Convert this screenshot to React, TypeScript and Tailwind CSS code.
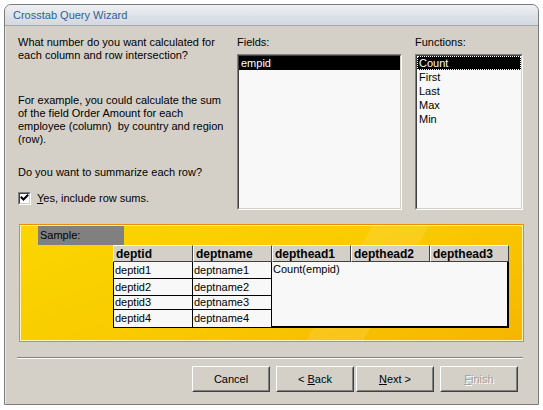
import React from "react";

function ListBox({ children }: { children: React.ReactNode }) {
  return (
    <div className="h-[156px] border border-t-[#808080] border-l-[#808080] border-b-white border-r-white">
      <div className="h-full border border-t-[#404040] border-l-[#404040] border-b-[#d4d0c8] border-r-[#d4d0c8] bg-[#f8f8f8] pt-[0px]">
        {children}
      </div>
    </div>
  );
}

function Btn({ children, disabled }: { children: React.ReactNode; disabled?: boolean }) {
  return (
    <div className="w-[78px] h-[26px] border border-t-white border-l-white border-b-[#404040] border-r-[#404040]">
      <div
        className={
          "h-full border border-t-[#d4d0c8] border-l-[#d4d0c8] border-b-[#808080] border-r-[#808080] flex items-center justify-center text-[11px] " +
          (disabled ? "text-[#a0a0a0] [text-shadow:1px_1px_0_#ffffff]" : "text-black")
        }
      >
        <span className="whitespace-pre">{children}</span>
      </div>
    </div>
  );
}

function HeadCell({ label, w }: { label: string; w: string }) {
  return (
    <div
      className={
        w +
        " h-[17px] bg-[#d4d0c8] border border-t-white border-l-white border-b-[#404040] border-r-[#404040] flex items-center pl-[2px] font-bold text-[12px] leading-none"
      }
    >
      {label}
    </div>
  );
}

export default function App() {
  const rows = [
    { a: "deptid1", b: "deptname1", h: "h-[17px]" },
    { a: "deptid2", b: "deptname2", h: "h-[17px]" },
    { a: "deptid3", b: "deptname3", h: "h-[14px]" },
    { a: "deptid4", b: "deptname4", h: "h-[17px]" },
  ];
  return (
    <div className="w-[543px] h-[410px] bg-white overflow-hidden font-['Liberation_Sans',Arial,sans-serif] text-black">
      <div className="ml-[4px] mt-[4px] w-[535px] h-[401px] border border-[#7b7b7b] rounded-t-[7px] flex flex-col bg-[#d4d0c8] overflow-hidden">
        <div className="h-[21px] shrink-0 bg-[linear-gradient(#eef0f4,#dde1e7_60%,#d3d8df)] border-b border-[#a3a8b0] flex items-center pl-[8px] text-[11px] text-[#2f5f9f]">
          Crosstab Query Wizard
        </div>
        <div className="flex-1 flex flex-col pl-[12px] pt-[10px] border-l border-[#e9e7e2]">
          <div className="flex text-[11px] leading-[13px]">
            <div className="w-[219px]">
              <p>
                What number do you want calculated for
                <br />
                each column and row intersection?
              </p>
              <p className="mt-[32px]">
                For example, you could calculate the sum
                <br />
                of the field Order Amount for each
                <br />
                employee (column)&nbsp; by country and region
                <br />
                (row).
              </p>
              <p className="mt-[20px]">Do you want to summarize each row?</p>
              <div className="mt-[13px] flex items-center h-[13px]">
                <div className="w-[13px] h-[13px] border border-t-[#808080] border-l-[#808080] border-b-white border-r-white">
                  <div className="w-full h-full border border-t-[#404040] border-l-[#404040] border-b-[#d4d0c8] border-r-[#d4d0c8] bg-white">
                    <svg width="9" height="9" viewBox="0 0 9 9" className="block">
                      <polyline points="1.5,3.5 3.5,5.5 7.5,1.5" fill="none" stroke="#000" strokeWidth="2" strokeLinecap="square" />
                    </svg>
                  </div>
                </div>
                <span className="ml-[6px]">
                  <span className="underline">Y</span>es, include row sums.
                </span>
              </div>
            </div>
            <div className="w-[165px]">
              <div className="h-[13px]">Fields:</div>
              <div className="mt-[5px]">
                <ListBox>
                  <div className="h-[14px] bg-black text-white pl-[2px] leading-[14px]">empid</div>
                </ListBox>
              </div>
            </div>
            <div className="ml-[13px] w-[108px]">
              <div className="h-[13px]">Functions:</div>
              <div className="mt-[5px]">
                <ListBox>
                  <div className="h-[14px] bg-black text-white pl-[1px] leading-[12px] border border-dotted border-white">Count</div>
                  {["First", "Last", "Max", "Min"].map((f) => (
                    <div key={f} className="h-[14px] pl-[2px] leading-[14px]">
                      {f}
                    </div>
                  ))}
                </ListBox>
              </div>
            </div>
          </div>

          <div className="mt-[14px] ml-[1px] w-[505px] h-[118px] border border-[#f08a00]">
            <div className="h-full border border-[#fff3b8] bg-[linear-gradient(120deg,transparent_62%,rgba(255,255,255,0.10)_62%,rgba(255,255,255,0.10)_72%,transparent_72%),linear-gradient(160deg,#fad600_0%,#f9cc00_45%,#f6b600_100%)]">
              <div className="ml-[17px] w-[86px] h-[19px] bg-[#808080] text-[11px] leading-[18px] pl-[2px]">Sample:</div>
              <div className="ml-[92px] flex">
                <HeadCell label="deptid" w="w-[80px]" />
                <HeadCell label="deptname" w="w-[79px]" />
                <HeadCell label="depthead1" w="w-[79px]" />
                <HeadCell label="depthead2" w="w-[79px]" />
                <HeadCell label="depthead3" w="w-[79px]" />
              </div>
              <div className="ml-[92px] flex items-start text-[11px]">
                <div className="w-[159px] border-l border-b border-black bg-[#f8f8f8]">
                  {rows.map((r, i) => (
                    <div key={i} className={"flex border-b border-black last:border-b-0 " + r.h}>
                      <div className="w-[79px] border-r border-black pl-[1px] flex items-center">{r.a}</div>
                      <div className="w-[79px] border-r border-black pl-[1px] flex items-center">{r.b}</div>
                    </div>
                  ))}
                </div>
                <div className="-ml-[1px] w-[238px] h-[66px] border-l border-r-2 border-b-2 border-black bg-[#f8f8f8] pl-[1px] leading-[15px]">
                  Count(empid)
                </div>
              </div>
            </div>
          </div>

          <div className="mt-[15px] ml-[-1px] w-[506px] h-[2px] border-t border-[#808080] border-b border-b-white" />

          <div className="mt-[7px] flex justify-end pr-[20px] text-[11px]">
            <Btn>Cancel</Btn>
            <div className="ml-[6px]">
              <Btn>
                {"< "}
                <span className="underline">B</span>ack
              </Btn>
            </div>
            <div className="ml-[2px]">
              <Btn>
                <span className="underline">N</span>
                {"ext >"}
              </Btn>
            </div>
            <div className="ml-[6px]">
              <Btn disabled>
                <span className="underline">F</span>inish
              </Btn>
            </div>
          </div>
        </div>
      </div>
    </div>
  );
}
